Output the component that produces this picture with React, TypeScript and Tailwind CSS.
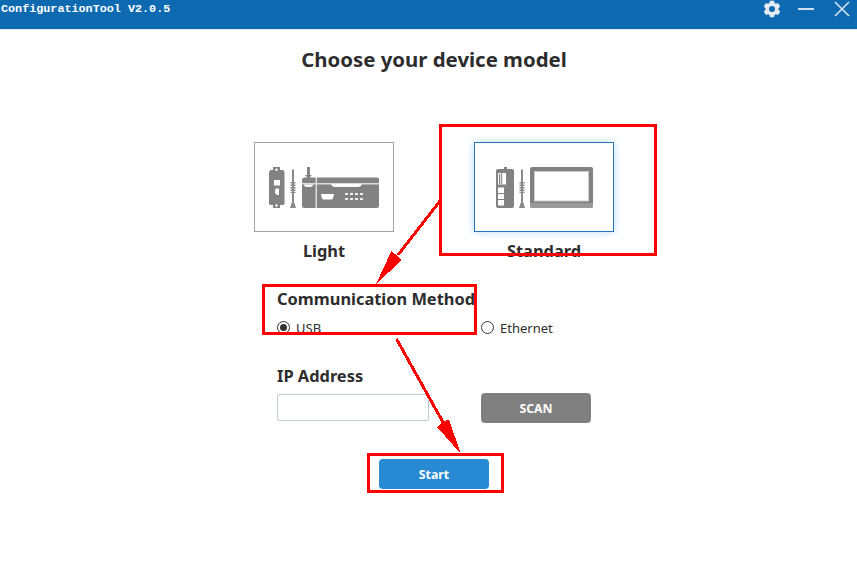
import React, { useState } from "react";

function Gear() {
  return (
    <svg width="18" height="18" viewBox="0 0 24 24" className="fill-[#e3ebf3]">
      <path
        fillRule="evenodd"
        d="M9.300 1h5.400l.7 3 1.700 1 3.100-.9 2.700 4.700-2.200 2.200v2l2.200 2.200-2.700 4.700-3.100-.9-1.700 1-.7 3H9.300l-.7-3-1.700-1-3.100.9-2.700-4.700L3.300 13v-2L1.100 8.800l2.700-4.700 3.100.9 1.700-1zM12 8a4 4 0 1 0 0 8 4 4 0 0 0 0-8z"
      />
    </svg>
  );
}

function TitleBar() {
  return (
    <header className="flex h-[30px] justify-between border-b border-[#e3eff8] bg-[#0e6ab0]">
      <span className="whitespace-pre pt-px pl-px font-['Liberation_Mono',monospace] text-[11.75px] leading-[16px] font-bold text-white">
        ConfigurationTool V2.0.5
      </span>
      <div className="flex h-[18px] items-center pr-[7px]">
        <Gear />
        <span className="ml-[17px] h-[2px] w-[16px] bg-[#cfdfed]" />
        <svg width="16" height="16" viewBox="0 0 16 16" className="ml-[20px] stroke-[#dbe7f1]" strokeWidth="1.5">
          <path d="M1 1 15 15M15 1 1 15" />
        </svg>
      </div>
    </header>
  );
}

function Antenna({ x }: { x: number }) {
  return (
    <g transform={`translate(${x} 0)`} fill="#8a8a8a">
      <path d="M2 2.500h2V37H2z" />
      <path d="M.5 15h5v1.500h-5zM.5 17.500h5V19h-5zM.5 20h5v1.500h-5zM.5 22.500h5V24h-5zM.5 25h5v1h-5zM1.500 36h3L6 41H0z" />
    </g>
  );
}

function LightDevice() {
  return (
    <svg width="110" height="42" viewBox="0 0 110 42" className="mt-px">
      <path fill="#828282" d="M4 0h7v3h3l1.500 2v32L14 38h-3v3H4v-3H1.500L0 37V5l1.500-2H4z" />
      <circle cx="7.500" cy="2.800" r="1.200" fill="#fff" />
      <circle cx="7.500" cy="38.500" r="1.200" fill="#fff" />
      <path fill="#fff" d="M5 13h6v5.500H5zM7 21.500h3V28H8l-2-2v-3z" />
      <Antenna x={21} />
      <path fill="#828282" d="M38 0h3v8h2l-3 3h-1l-3-3h2zM35 10.500h12V41H35q-2 0-2-2V13q0-2 2-2.500zM48 10.500h60q2 0 2 2V39q0 2-2 2H48z" />
      <path fill="#ddd" d="M33 16h77v1.500H33zM46.500 11H48v30h-1.500z" />
      <path fill="#fff" d="M35 17.500h9q0 2.500-3 2.500h-3q-3 0-3-2.500zM62 17h31q-1 3-4 3H66q-3 0-4-3zM52 27h13l-1 4.500q-.5 1-1.500 1h-8q-1 0-1.500-1z" />
      <path fill="#eee" d="M76 26h3v2h-3zM81 26h3v2h-3zM86 26h3v2h-3zM91 26h3v2h-3zM76 31h3v2h-3zM81 31h3v2h-3zM86 31h3v2h-3zM91 31h3v2h-3z" />
    </svg>
  );
}

function StandardDevice() {
  return (
    <svg width="98" height="42" viewBox="0 0 98 42" className="mt-px ml-[2px]">
      <path fill="#828282" d="M8 0h3v2h5q2 0 2 2v35q0 2-2 2H2q-2 0-2-2V4q0-2 2-2h6z" />
      <path fill="#fff" d="M2 6h8v11.500H2zM2 20.500h6V26H2zM2 27h6v5H2zM2 33h6v5.500H2z" />
      <path fill="#828282" d="M3 7h1.300v10H3zM5.200 6h1v11.500h-1z" />
      <Antenna x={23} />
      <rect x="34" y="0" width="63" height="41" rx="2" fill="#828282" />
      <path fill="#9a9a9a" d="M34 36h63v3q0 2-2 2H36q-2 0-2-2z" />
      <rect x="38.500" y="4.500" width="54" height="29.500" fill="#fff" stroke="#ccc" />
    </svg>
  );
}

function DeviceCard({ label, selected, onClick, children }: { label: string; selected: boolean; onClick: () => void; children: React.ReactNode }) {
  return (
    <button type="button" onClick={onClick} className="flex w-[140px] flex-col items-center">
      <span
        className={
          selected
            ? "flex h-[90px] w-full items-center justify-center border border-[#2478b7] shadow-[0_0_8px_#b9dbf5]"
            : "flex h-[90px] w-full items-center justify-center border border-[#a2a2a2]"
        }
      >
        {children}
      </span>
      <span className="mt-[7px] text-[16.4px] leading-[24px] font-bold">{label}</span>
    </button>
  );
}

function Radio({ label, checked, onClick }: { label: string; checked: boolean; onClick: () => void }) {
  return (
    <button type="button" onClick={onClick} className="flex h-[20px] items-center gap-[6px] text-[13px]">
      <span className="mb-px flex size-[13px] items-center justify-center rounded-full border border-[#333]">
        {checked && <span className="size-[7px] rounded-full bg-[#333]" />}
      </span>
      <span className="pt-px">{label}</span>
    </button>
  );
}

function Annotations() {
  return (
    <svg className="pointer-events-none absolute inset-0" width="857" height="580" viewBox="0 0 857 580" fill="none" stroke="#f00" strokeWidth="3" shapeRendering="crispEdges">
      <rect x="440.500" y="125.500" width="215" height="129" />
      <rect x="263.500" y="285.500" width="212" height="48" />
      <rect x="368.500" y="454.500" width="134" height="37" />
      <path d="M440 201 398 255M396.500 339 444 424" />
      <path fill="#f00" stroke="none" d="M376 284 391.500 251 402 260zM461 454 437 427 443 421 449 420z" />
    </svg>
  );
}

export default function App() {
  const [device, setDevice] = useState("standard");
  const [method, setMethod] = useState("usb");
  return (
    <div className="relative h-[580px] w-[857px] overflow-hidden bg-white font-['Noto_Sans',sans-serif] text-[#2d2d2d]">
      <TitleBar />
      <main className="flex flex-col items-center pt-[14px] pl-[11px]">
        <h1 className="text-[20.4px] leading-[30px] font-bold whitespace-nowrap">Choose your device model</h1>
        <div className="mt-[68px] flex gap-[80px]">
          <DeviceCard label="Light" selected={device === "light"} onClick={() => setDevice("light")}>
            <LightDevice />
          </DeviceCard>
          <DeviceCard label="Standard" selected={device === "standard"} onClick={() => setDevice("standard")}>
            <StandardDevice />
          </DeviceCard>
        </div>
        <section className="mt-[24px] w-[314px]">
          <h2 className="text-[16.4px] leading-[24px] font-bold whitespace-nowrap">Communication Method</h2>
          <div className="mt-[7px] grid grid-cols-[204px_110px]">
            <Radio label="USB" checked={method === "usb"} onClick={() => setMethod("usb")} />
            <Radio label="Ethernet" checked={method === "ethernet"} onClick={() => setMethod("ethernet")} />
          </div>
          <h2 className="mt-[26px] text-[16.4px] leading-[24px] font-bold">IP Address</h2>
          <div className="mt-[5px] grid grid-cols-[204px_110px]">
            <input aria-label="IP Address" className="mt-px h-[27px] w-[152px] rounded-[2px] border border-[#bfcccf] px-2 text-[13px] outline-none" />
            <button type="button" className="h-[30px] rounded-[4px] bg-[#808080] pt-[2px] text-[12.3px] font-bold text-white">SCAN</button>
          </div>
        </section>
        <button type="button" className="mt-[36px] h-[30px] w-[110px] rounded-[4px] bg-[#288ad2] pt-[2px] text-[12.3px] font-bold text-white">Start</button>
      </main>
      <Annotations />
    </div>
  );
}
